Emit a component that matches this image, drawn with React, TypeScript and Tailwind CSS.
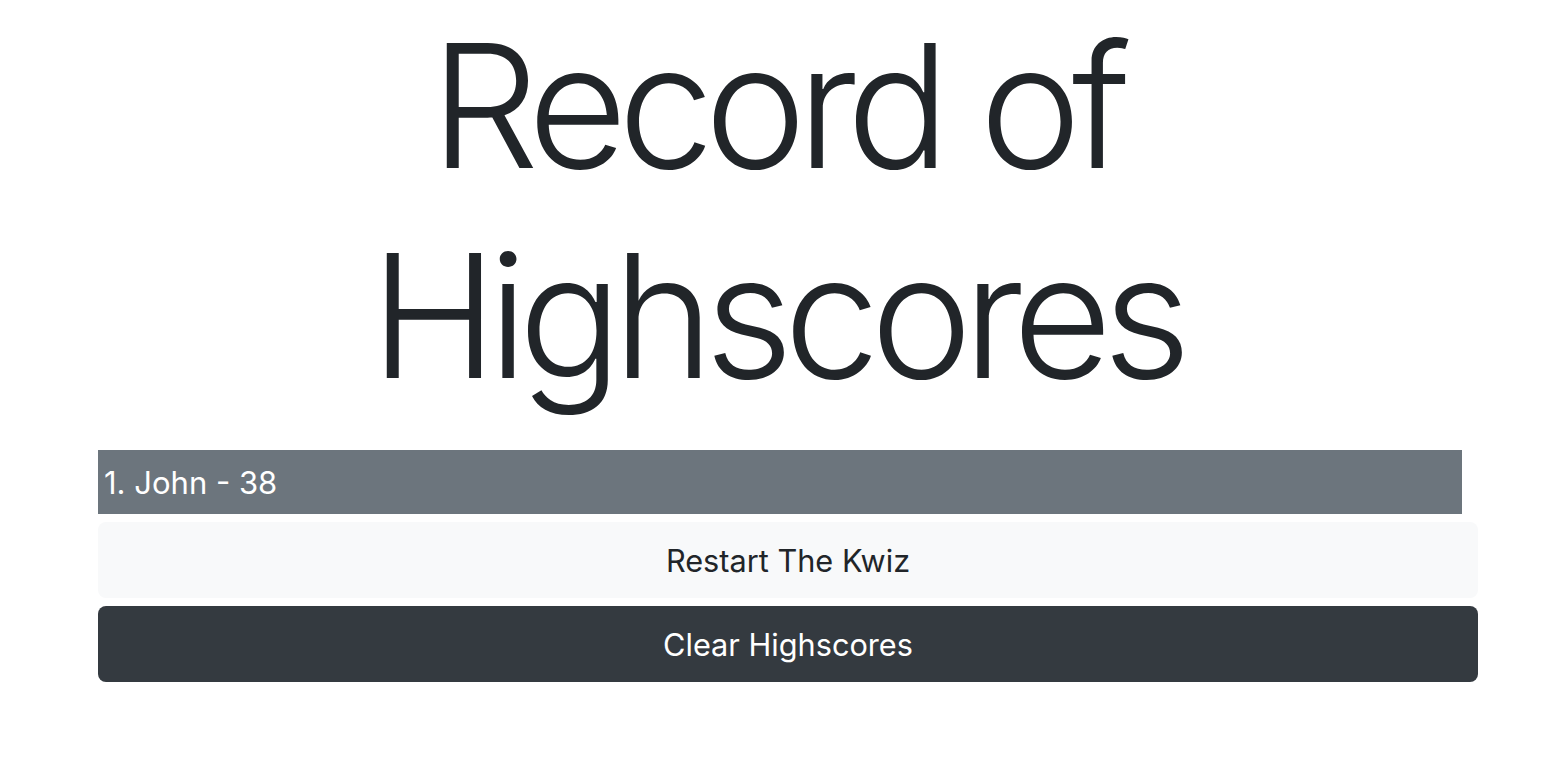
export default function App() {
  const scores = [{ name: "John", score: 38 }]

  return (
    <div className="min-h-[764px] bg-white text-[#212529] font-['Inter','Liberation_Sans',sans-serif]">
      <h1 className="mx-auto max-w-[1380px] pr-[14px] text-center text-[172px] leading-[210px] font-light tracking-[-9.5px]">
        Record of Highscores
      </h1>

      <div className="pl-[98px] pt-[30px]">
        <ol className="w-[1364px]">
          {scores.map((s, i) => (
            <li key={s.name} className="h-16 bg-[#6c757d] px-[6px] text-[31px] leading-[65px] text-white">
              {i + 1}. {s.name} - {s.score}
            </li>
          ))}
        </ol>

        <div className="mt-2 flex w-[1380px] flex-col gap-2">
          <button className="h-[76px] rounded-lg bg-[#f8f9fa] pt-[2px] text-[30.7px] text-[#212529]">
            Restart The Kwiz
          </button>
          <button className="h-[76px] rounded-lg bg-[#343a40] pt-[2px] text-[30.7px] text-white">
            Clear Highscores
          </button>
        </div>
      </div>
    </div>
  )
}
